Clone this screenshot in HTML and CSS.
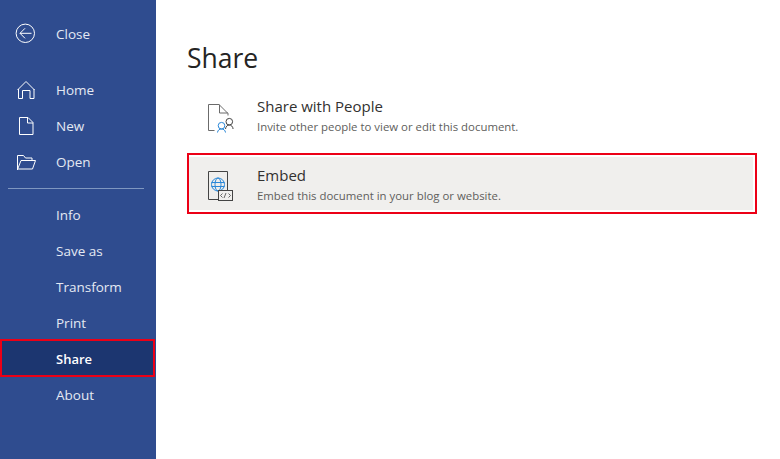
FILE: index.html
```html
<!DOCTYPE html>
<html lang="en">
<head>
    <meta charset="UTF-8">
    <title>Share</title>
    <link rel="stylesheet" href="styles.css">
</head>
<body>
    <div class="app">
        <nav class="sidebar">
            <div class="nav-item has-icon close-item">
                <svg class="nav-icon" width="22" height="22" viewBox="0 0 22 22" fill="none" stroke="#fff" stroke-width="1">
                    <circle cx="10.300" cy="10.300" r="9.200"/>
                    <path d="M10 5.300 5 10.300l5 5M5 10.300h11.500"/>
                </svg>
                <span>Close</span>
            </div>
            <div class="nav-item has-icon">
                <svg class="nav-icon" width="22" height="22" viewBox="0 0 22 22" fill="none" stroke="#fff" stroke-width="1">
                    <path d="M2.500 11 11 2.500l8.500 8.500M3.500 10v9.500h4v-8h7.500v8h4V10"/>
                </svg>
                <span>Home</span>
            </div>
            <div class="nav-item has-icon">
                <svg class="nav-icon" width="22" height="22" viewBox="0 0 22 22" fill="none" stroke="#fff" stroke-width="1">
                    <path d="M4.500 2.500h8.500l5 5v12H4.500zM12.500 2.500v5.500h5.500"/>
                </svg>
                <span>New</span>
            </div>
            <div class="nav-item has-icon">
                <svg class="nav-icon" width="22" height="22" viewBox="0 0 22 22" fill="none" stroke="#fff" stroke-width="1">
                    <path d="M2.500 19V4.500h6l2 2.500h6.500v2.500M2.500 18.500l3.500-9h14.500l-3 8.500H3"/>
                </svg>
                <span>Open</span>
            </div>
            <div class="separator"></div>
            <div class="nav-item"><span>Info</span></div>
            <div class="nav-item"><span>Save as</span></div>
            <div class="nav-item"><span>Transform</span></div>
            <div class="nav-item"><span>Print</span></div>
            <div class="nav-item active"><span>Share</span></div>
            <div class="nav-item"><span>About</span></div>
        </nav>

        <main class="content">
            <h1>Share</h1>
            <div class="option people">
                <svg class="option-icon" width="34" height="36" viewBox="0 0 34 36" fill="none">
                    <path d="M3.500 32.500V6.500h10.500l9 9v2M14.500 6.500v8.500h8.500M3.500 32.500h6" stroke="#6b6b6b"/>
                    <circle cx="24.300" cy="23.700" r="3.300" stroke="#444"/>
                    <path d="M20.500 31c.3-2.500 1.800-4 3.800-4s3.500 1.500 3.800 4" stroke="#444"/>
                    <circle cx="16.500" cy="27.700" r="3.300" stroke="#2b88d8"/>
                    <path d="M12.500 34.500c.3-2.500 2-3.500 4-3.500s3.700 1 4 3.500" stroke="#2b88d8"/>
                </svg>
                <div class="option-text">
                    <div class="option-title">Share with People</div>
                    <div class="option-desc">Invite other people to view or edit this document.</div>
                </div>
            </div>
            <div class="option selected">
                <svg class="option-icon" width="34" height="36" viewBox="0 0 34 36" fill="none">
                    <path d="M22.500 24V5.500H3.500v28h10" stroke="#444"/>
                    <circle cx="13" cy="18.500" r="6.500" stroke="#2b88d8"/>
                    <ellipse cx="13" cy="18.500" rx="3" ry="6.500" stroke="#2b88d8"/>
                    <path d="M6.500 16.500h13M6.500 20.500h13" stroke="#2b88d8"/>
                    <rect x="13.500" y="24.500" width="14" height="10" fill="#f0efed" stroke="#444"/>
                    <path d="M17.500 27.500l-2 2 2 2M19 32l2-5M23.500 27.500l2 2-2 2" stroke="#444" stroke-width=".8"/>
                </svg>
                <div class="option-text">
                    <div class="option-title">Embed</div>
                    <div class="option-desc">Embed this document in your blog or website.</div>
                </div>
            </div>
        </main>
    </div>
</body>
</html>
```

FILE: styles.css
```css
* {
    margin: 0;
    padding: 0;
    box-sizing: border-box;
    font-family: "Open Sans", "Noto Sans", sans-serif;
}

body {
    background-color: white;
    overflow: hidden;
}

.app {
    display: flex;
    height: 459px;
}

.sidebar {
    width: 156px;
    flex-shrink: 0;
    padding-top: 16px;
    background-color: #2f4c8f;
}

.nav-item {
    display: flex;
    align-items: center;
    height: 36px;
    padding-left: 56px;
    font-size: 13.5px;
    color: #e4e9f3;
}

.has-icon {
    padding-left: 15px;
}

.close-item {
    margin-bottom: 20px;
}

.nav-icon {
    flex-shrink: 0;
    margin-right: 19px;
}

.separator {
    height: 1px;
    margin: 8px 12px 8px 8px;
    background-color: #7f97c0;
}

.active {
    width: 155px;
    height: 38px;
    margin-top: -2px;
    padding-top: 2px;
    padding-left: 54px;
    border: 2px solid #ec0016;
    background-color: #1c3670;
    color: white;
    font-size: 13px;
    font-weight: 600;
}

.content {
    flex: 1;
    padding: 36px 23px 0 31px;
}

h1 {
    font-size: 26.5px;
    font-weight: 500;
    line-height: 44px;
    color: #252423;
    margin-bottom: 5px;
}

.option {
    display: flex;
    align-items: center;
    height: 62px;
    margin-bottom: 6px;
    padding-left: 16px;
    border: 2px solid transparent;
}

.selected {
    height: 61px;
    padding: 2px 2px 2px 0;
    border-color: #ec0016;
    background-color: #f0efed;
    background-clip: content-box;
}

.selected .option-icon {
    margin-left: 16px;
}

.option-icon {
    flex-shrink: 0;
}

.option-text {
    margin-left: 18px;
}

.people .option-text {
    margin-top: -3px;
}

.option-title {
    font-size: 15px;
    line-height: 25px;
    color: #323130;
}

.option-desc {
    font-size: 11.4px;
    line-height: 16px;
    color: #605e5c;
}
```
